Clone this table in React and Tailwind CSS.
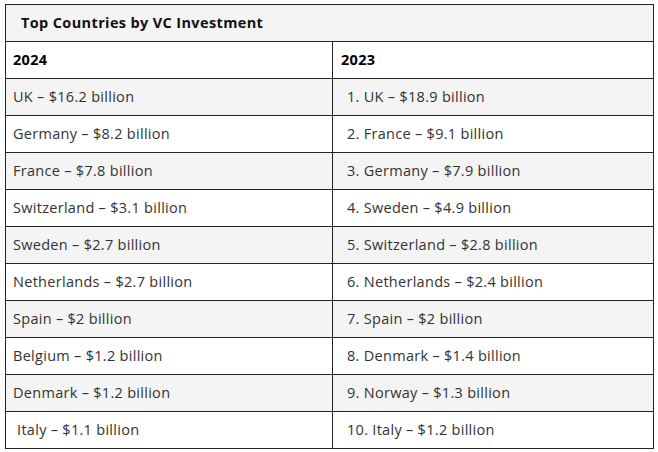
import React from 'react';

const rows = [
  ['UK – $16.2 billion', '1. UK – $18.9 billion'],
  ['Germany – $8.2 billion', '2. France – $9.1 billion'],
  ['France – $7.8 billion', '3. Germany – $7.9 billion'],
  ['Switzerland – $3.1 billion', '4. Sweden – $4.9 billion'],
  ['Sweden – $2.7 billion', '5. Switzerland – $2.8 billion'],
  ['Netherlands – $2.7 billion', '6. Netherlands – $2.4 billion'],
  ['Spain – $2 billion', '7. Spain – $2 billion'],
  ['Belgium – $1.2 billion', '8. Denmark – $1.4 billion'],
  ['Denmark – $1.2 billion', '9. Norway – $1.3 billion'],
  ['\u00a0Italy – $1.1 billion', '10. Italy – $1.2 billion'],
];

export default function App() {
  return (
    <div className="w-[658px] h-[452px] bg-white pt-[4px] pl-[5px]" style={{ fontFamily: '"Open Sans", "Liberation Sans", sans-serif' }}>
      <table className="w-[649px] border-collapse border border-[#222] text-[14.5px] tracking-[0.02em] text-[#333]">
        <thead>
          <tr className="h-[37px] bg-[#f4f4f4]">
            <th colSpan={2} className="border border-[#222] px-[15px] text-left font-bold text-[#111] text-[14.5px] tracking-[0.025em]">
              Top Countries by VC Investment
            </th>
          </tr>
          <tr className="h-[37px] bg-white">
            <th className="w-[327px] border border-[#222] px-[7px] text-left font-bold text-black">2024</th>
            <th className="border border-[#222] px-[8px] text-left font-bold text-black">2023</th>
          </tr>
        </thead>
        <tbody>
          {rows.map((r, i) => (
            <tr key={i} className={`h-[37px] ${i % 2 === 0 ? 'bg-[#f4f4f4]' : 'bg-white'}`}>
              <td className="border border-[#222] px-[7px] whitespace-pre">{r[0]}</td>
              <td className="border border-[#222] pl-[14px] pr-[8px]">{r[1]}</td>
            </tr>
          ))}
        </tbody>
      </table>
    </div>
  );
}
